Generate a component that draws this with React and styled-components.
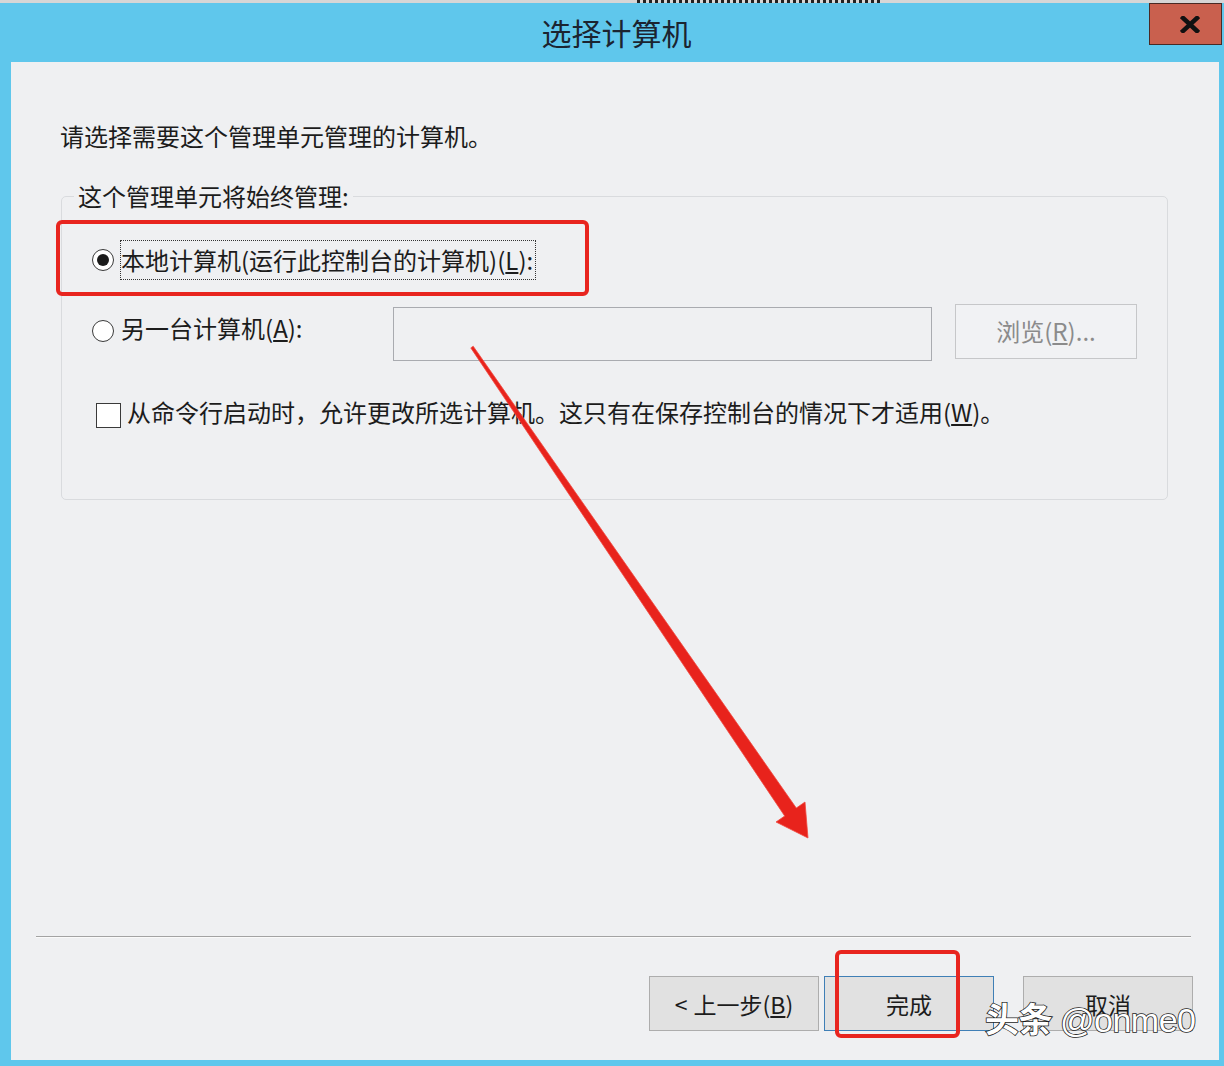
import styled, { createGlobalStyle } from "styled-components";

const GlobalStyle = createGlobalStyle`
  html, body {
    margin: 0;
    padding: 0;
    background: #5fc7ec;
  }
  body {
    font-family: "Noto Sans CJK SC", "Noto Sans", sans-serif;
    color: #1c1c1c;
  }
`;

const Window = styled.div`
  position: relative;
  width: 1224px;
  height: 1066px;
  display: flex;
  flex-direction: column;
  background: #5fc7ec;
  overflow: hidden;
`;

const TopStrip = styled.div`
  height: 3px;
  background: #d6d6d6;
  display: flex;
`;

const StripMarks = styled.div`
  margin-left: 637px;
  width: 246px;
  background: repeating-linear-gradient(
    90deg,
    #222 0 3px,
    transparent 3px 6px
  );
`;

const Frame = styled.div`
  flex: 1;
  display: flex;
  flex-direction: column;
  padding: 0 5px 6px 11px;
`;

const TitleBar = styled.div`
  height: 59px;
  margin-right: -3px;
  display: grid;
  grid-template-columns: 1fr auto 1fr;
`;

const Title = styled.div`
  grid-column: 2;
  align-self: center;
  font-size: 30px;
  line-height: 40px;
  color: #1b2430;
  margin-top: -2px;
`;

const CloseButton = styled.div`
  grid-column: 3;
  justify-self: end;
  align-self: start;
  width: 63px;
  height: 40px;
  background: #c9604e;
  border: 1px solid #4a2a24;
  display: flex;
  align-items: center;
  justify-content: center;
  padding-left: 8px;
  box-sizing: content-box;
`;

const Content = styled.div`
  flex: 1;
  display: flex;
  flex-direction: column;
  background: #eff0f2;
  font-size: 24px;
  line-height: 32px;
`;

const Instruction = styled.div`
  margin: 58px 0 0 49px;
`;

const Group = styled.fieldset`
  margin: 28px 51px 0 50px;
  padding: 0 0 71px 30px;
  border: 1px solid #d9dbde;
  border-radius: 5px;
  min-width: 0;
`;

const Legend = styled.legend`
  margin-left: -18px;
  padding: 0 4px;
`;

const OptionRow = styled.div`
  display: flex;
  align-items: center;
  gap: 7px;
  height: ${(p) => p.$height}px;
  margin-top: ${(p) => p.$top}px;
`;

const Radio = styled.span`
  flex: none;
  width: 20px;
  height: 20px;
  border: 1px solid #3a3a3a;
  border-radius: 50%;
  background: #fff;
  display: flex;
  align-items: center;
  justify-content: center;

  &::after {
    content: "";
    width: 12px;
    height: 12px;
    border-radius: 50%;
    background: ${(p) => (p.$checked ? "#1a1a1a" : "transparent")};
  }
`;

const OptionLabel = styled.span`
  white-space: nowrap;
  width: ${(p) => (p.$width ? `${p.$width}px` : "auto")};
  margin-bottom: ${(p) => p.$lift || 0}px;

  &.focus {
    outline: 1px dotted #333;
    outline-offset: 0;
    padding: 3px 2px 3px 0;
  }
`;

const ComputerInput = styled.div`
  flex: none;
  width: 537px;
  height: 52px;
  margin-top: 5px;
  border: 1px solid #a9abb0;
  background: #eff0f2;
`;

const BrowseButton = styled.div`
  flex: none;
  margin-left: 16px;
  width: 180px;
  height: 53px;
  border: 1px solid #c6c7c9;
  background: #f1f2f4;
  color: #8b8b8b;
  display: flex;
  align-items: center;
  justify-content: center;
`;

const CheckRow = styled.div`
  display: flex;
  align-items: flex-start;
  gap: 6px;
  margin: 37px 0 0 4px;
`;

const Checkbox = styled.span`
  flex: none;
  width: 23px;
  height: 23px;
  margin-top: 7px;
  border: 1px solid #3a3a3a;
  background: #fff;
`;

const Spacer = styled.div`
  flex: 1;
`;

const Separator = styled.div`
  margin: 0 28px 0 25px;
  border-top: 1px solid #a3a3a3;
  border-bottom: 1px solid #fafafa;
`;

const ButtonRow = styled.div`
  display: flex;
  justify-content: flex-end;
  margin: 38px 26px 29px 0;
`;

const DialogButton = styled.div`
  width: 168px;
  height: 53px;
  margin-left: ${(p) => p.$gap || 0}px;
  border: 1px solid ${(p) => (p.$default ? "#3f7fb6" : "#adadad")};
  background: #e1e1e1;
  display: flex;
  align-items: center;
  justify-content: center;
  gap: 6px;
  font-size: 23px;
`;

const Highlight = styled.div`
  position: absolute;
  left: ${(p) => p.$x}px;
  top: ${(p) => p.$y}px;
  width: ${(p) => p.$w}px;
  height: ${(p) => p.$h}px;
  box-sizing: border-box;
  border: 4px solid #e8251f;
  border-radius: 6px;
  pointer-events: none;
`;

const ArrowLayer = styled.svg`
  position: absolute;
  left: 0;
  top: 0;
  pointer-events: none;
`;

const Watermark = styled.div`
  position: absolute;
  left: 985px;
  top: 998px;
  font-family: "Liberation Sans", "Noto Sans CJK SC", sans-serif;
  font-size: 34px;
  line-height: 40px;
  color: #fff;
  -webkit-text-stroke: 1.6px #1d1d1d;
  paint-order: stroke fill;
  letter-spacing: -0.5px;
  white-space: nowrap;
`;

const WatermarkCjk = styled.span`
  font-family: "Noto Sans CJK SC", sans-serif;
  font-weight: 700;
  margin-right: 8px;
`;

export default function App() {
  return (
    <>
      <GlobalStyle />
      <Window>
        <TopStrip>
          <StripMarks />
        </TopStrip>
        <Frame>
          <TitleBar>
            <Title>选择计算机</Title>
            <CloseButton>
              <svg width="20" height="17" viewBox="0 0 20 17">
                <path
                  d="M3 2 L17 15 M17 2 L3 15"
                  stroke="#111"
                  strokeWidth="4.5"
                  strokeLinecap="square"
                />
              </svg>
            </CloseButton>
          </TitleBar>
          <Content>
            <Instruction>请选择需要这个管理单元管理的计算机。</Instruction>
            <Group>
              <Legend>这个管理单元将始终管理:</Legend>
              <OptionRow $height={38} $top={29}>
                <Radio $checked />
                <OptionLabel className="focus">
                  本地计算机(运行此控制台的计算机)(<u>L</u>):
                </OptionLabel>
              </OptionRow>
              <OptionRow $height={56} $top={24}>
                <Radio />
                <OptionLabel $width={265} $lift={6}>
                  另一台计算机(<u>A</u>):
                </OptionLabel>
                <ComputerInput />
                <BrowseButton>
                  浏览(<u>R</u>)...
                </BrowseButton>
              </OptionRow>
              <CheckRow>
                <Checkbox />
                <span>
                  从命令行启动时，允许更改所选计算机。这只有在保存控制台的情况下才适用(<u>W</u>)。
                </span>
              </CheckRow>
            </Group>
            <Spacer />
            <Separator />
            <ButtonRow>
              <DialogButton>
                <span>&lt;</span>
                <span>
                  上一步(<u>B</u>)
                </span>
              </DialogButton>
              <DialogButton $default $gap={5}>
                完成
              </DialogButton>
              <DialogButton $gap={29}>取消</DialogButton>
            </ButtonRow>
          </Content>
        </Frame>

        <Highlight $x={56} $y={220} $w={533} $h={76} />
        <Highlight $x={835} $y={950} $w={125} $h={88} />

        <ArrowLayer width="1224" height="1066" viewBox="0 0 1224 1066">
          <polygon
            points="470.8,347.9 473.2,346.2 796.3,808 805,802 808,838 776,822 784.7,816"
            fill="#e8231c"
            stroke="#f04a40"
            strokeWidth="0.8"
            strokeLinejoin="round"
          />
        </ArrowLayer>

        <Watermark>
          <WatermarkCjk>头条</WatermarkCjk>@onme0
        </Watermark>
      </Window>
    </>
  );
}
